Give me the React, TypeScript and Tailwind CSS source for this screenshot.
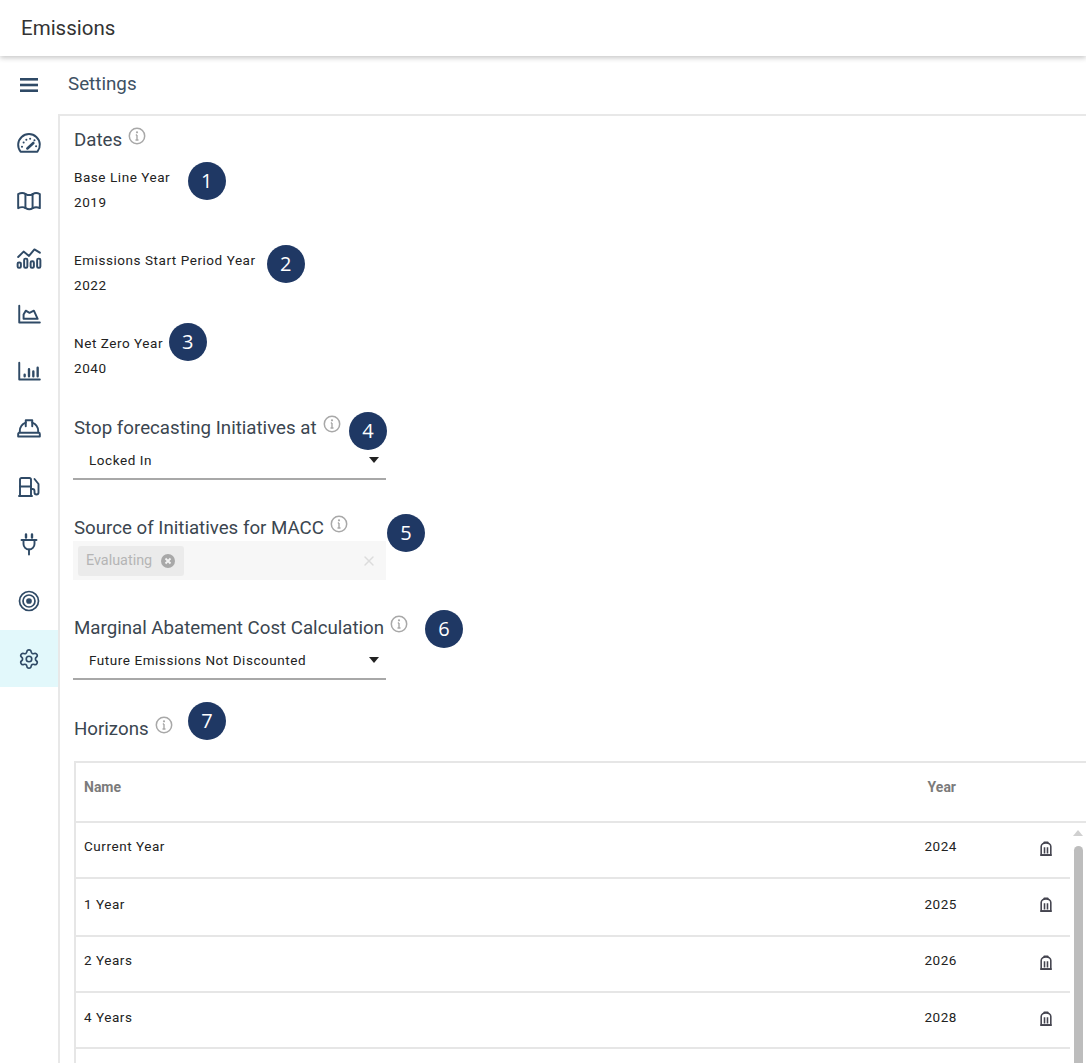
import { Settings, X } from "lucide-react";
import type { ReactNode } from "react";

const navy = "#2f4a66";

// sidebar icons, drawn on a 24 box
const Glyph = ({ children }: { children: ReactNode }) => (
  <svg width="26" height="26" viewBox="0 0 24 24" fill="none" stroke={navy} strokeWidth="1.8" strokeLinecap="round" strokeLinejoin="round">
    {children}
  </svg>
);

const GaugeIcon = () => (
  <Glyph>
    <path d="M4.200 20a10 10 0 1 1 15.600 0Z" />
    <path d="M10.500 17l5.500-5" strokeWidth="2.400" />
    <path d="M5.500 15.500h.1M7 11.500h.1M9.500 9h.1M13 8h.1M17 9.500h.1M18.500 15h.1" strokeWidth="1.800" />
  </Glyph>
);

const MapGlyph = () => (
  <Glyph>
    <path d="M2 6.500c2.500-1.200 5-1.200 7 0s4.500 1.200 6.500 0 4-1.200 6.500 0v13c-2.500-1.200-4.500-1.200-6.500 0s-4.500 1.200-6.500 0-4.500-1.200-7 0Z" />
    <path d="M8.700 6.500v13M15.300 6.500v13" />
  </Glyph>
);

const TrendBarsIcon = () => (
  <Glyph>
    <path d="M2 12l5-5 5 4 5-6 5 3" />
    <rect x="1.500" y="17" width="3" height="5" rx="1.200" />
    <rect x="7.500" y="13.500" width="3" height="8.500" rx="1.200" />
    <rect x="13.500" y="16" width="3" height="6" rx="1.200" />
    <rect x="19.500" y="13.500" width="3" height="8.500" rx="1.200" />
  </Glyph>
);

const AreaIcon = () => (
  <Glyph>
    <path d="M3 3.500v15.500h19" />
    <path d="M7 15.500v-4l2-3.500 3.500 2 4-2 3.500 7.500Z" />
  </Glyph>
);

const BarsIcon = () => (
  <Glyph>
    <path d="M3 3.500v15.500h19" />
    <path d="M8 14.500v1.500M12 9.500v6.500M16 11.500v4.500M20 8v8" strokeWidth="2.200" />
  </Glyph>
);

const HelmetIcon = () => (
  <Glyph>
    <path d="M3.500 15v-1a8.500 8.500 0 0 1 5.500-7.900M20.500 15v-1a8.500 8.500 0 0 0-5.500-7.900" />
    <path d="M9 9.500V4h6v5.500" />
    <path d="M3 15.500h18a1 1 0 0 1 1 1V19H2v-2.500a1 1 0 0 1 1-1Z" />
  </Glyph>
);

const PumpIcon = () => (
  <svg width="24" height="24" viewBox="0 0 24 24" fill="none" stroke={navy} strokeWidth="1.900" strokeLinecap="round" strokeLinejoin="round">
    <path d="M3 21V4.500A1.500 1.500 0 0 1 4.500 3h8A1.500 1.500 0 0 1 14 4.500V21" />
    <path d="M3 11.500h11M2 21h13" />
    <path d="M14 14h1.500a2 2 0 0 1 2 2v1.500a2 2 0 0 0 4 0V9l-4-5" />
  </svg>
);

const PlugIcon = () => (
  <svg width="24" height="24" viewBox="0 0 24 24" fill="none" stroke={navy} strokeWidth="1.900" strokeLinecap="round" strokeLinejoin="round">
    <path d="M9 2.500v3M15 2.500v3" strokeWidth="2.400" />
    <path d="M4.500 8h15" />
    <path d="M6.500 8.500v3.500a5.500 5.500 0 0 0 11 0V8.500" />
    <path d="M12 17.500v5" />
  </svg>
);

const TargetIcon = () => (
  <svg width="24" height="24" viewBox="0 0 24 24" fill="none" stroke={navy} strokeWidth="1.700">
    <circle cx="12" cy="12" r="9.500" />
    <circle cx="12" cy="12" r="6" />
    <circle cx="12" cy="12" r="2" fill={navy} />
  </svg>
);

const TrashGlyph = () => (
  <svg width="14" height="16" viewBox="0 0 16 18" fill="none" stroke="#44444f" strokeWidth="1.800" strokeLinejoin="round" className="mr-[17px] mt-[18px]">
    <path d="M2.500 16V6a5.500 4 0 0 1 11 0v10Z" />
    <path d="M6 2.500V1.200h4v1.300M1.500 16h13" />
    <path d="M6.300 7v7M9.700 7v7" />
  </svg>
);

const InfoMark = () => (
  <svg width="18" height="18" viewBox="0 0 18 18" fill="none" className="ml-[6px] -mt-[8px]">
    <circle cx="9" cy="9" r="7.700" stroke="#a8a8a8" strokeWidth="1.500" />
    <path d="M9 8v5M7.500 13h3M7.800 8H9" stroke="#a8a8a8" strokeWidth="1.400" />
    <circle cx="9" cy="5.300" r="1.100" fill="#a8a8a8" />
  </svg>
);

const navItems = [
  { key: "gauge", icon: <GaugeIcon /> },
  { key: "map", icon: <MapGlyph /> },
  { key: "trend", icon: <TrendBarsIcon /> },
  { key: "area", icon: <AreaIcon /> },
  { key: "bars", icon: <BarsIcon /> },
  { key: "helmet", icon: <HelmetIcon /> },
  { key: "fuel", icon: <PumpIcon /> },
  { key: "plug", icon: <PlugIcon /> },
  { key: "target", icon: <TargetIcon /> },
  { key: "settings", icon: <Settings size={22} color={navy} strokeWidth={1.8} />, active: true },
];

const Badge = ({ n, className }: { n: number; className: string }) => (
  <span
    className={`absolute flex h-[38px] w-[38px] items-center justify-center rounded-full bg-[#1f3864] font-['Open_Sans',sans-serif] text-[20px] text-white ${className}`}
  >
    {n}
  </span>
);

const Heading = ({ children }: { children: ReactNode }) => (
  <div className="flex h-[24px] items-center text-[18.700px] leading-[24px] text-[#3b4650]">{children}</div>
);

const YearField = ({ label, value, badge }: { label: string; value: string; badge: ReactNode }) => (
  <div className="relative h-[43px] text-[13.500px] leading-[18px] tracking-[0.550px] text-[#222]">
    <div>{label}</div>
    <div className="mt-[7px]">{value}</div>
    {badge}
  </div>
);

const SelectBox = ({ value }: { value: string }) => (
  <div className="-ml-px flex h-[40px] w-[313px] items-center justify-between border-b-2 border-[#a8a8a8] pl-[16px] pr-[7px] pt-[2px] text-[13.500px] tracking-[0.550px] text-[#222]">
    <span>{value}</span>
    <span className="h-0 w-0 border-x-[5px] border-t-[6px] border-x-transparent border-t-[#222]" />
  </div>
);

const rows = [
  { name: "Current Year", year: "2024", h: "h-[56px]", pt: "pt-[14px]" },
  { name: "1 Year", year: "2025", h: "h-[58px]", pt: "pt-[16px]" },
  { name: "2 Years", year: "2026", h: "h-[56px]", pt: "pt-[14px]" },
  { name: "4 Years", year: "2028", h: "h-[56px]", pt: "pt-[15px]" },
  { name: "", year: "", h: "h-[56px]", pt: "" },
];

export default function App() {
  return (
    <div className="flex h-[1063px] w-[1086px] flex-col overflow-hidden bg-white font-['Roboto',sans-serif]">
      <header className="z-10 flex h-[56px] shrink-0 items-center pl-[21px] text-[20.500px] text-[#333] shadow-[0_2px_5px_rgba(0,0,0,0.22)]">
        Emissions
      </header>

      <div className="flex min-h-0 flex-1">
        {/* left rail */}
        <aside className="flex w-[58px] shrink-0 flex-col">
          <div className="flex h-[58px] items-center justify-center pr-[1px]">
            <svg width="18" height="14" viewBox="0 0 18 14" fill={navy}>
              <rect width="18" height="2.600" />
              <rect y="5.700" width="18" height="2.600" />
              <rect y="11.400" width="18" height="2.600" />
            </svg>
          </div>
          <nav className="flex flex-col">
            {navItems.map((item) => (
              <div
                key={item.key}
                className={`flex h-[57.330px] items-center justify-center ${item.active ? "bg-[#e2f8fb]" : ""}`}
              >
                {item.icon}
              </div>
            ))}
          </nav>
        </aside>

        <main className="flex min-w-0 flex-1 flex-col">
          <div className="flex h-[58px] shrink-0 items-center pb-[2px] pl-[10px] text-[18.800px] text-[#3d5063]">Settings</div>

          <div className="min-h-0 flex-1 overflow-hidden border-l-2 border-t-2 border-[#e8e8e8] pl-[14px] pt-[12px]">
            <Heading>
              Dates <InfoMark />
            </Heading>

            <div className="mt-[16px] flex flex-col gap-[40px]">
              <YearField label="Base Line Year" value="2019" badge={<Badge n={1} className="left-[114px] -top-[6px]" />} />
              <YearField label="Emissions Start Period Year" value="2022" badge={<Badge n={2} className="left-[193px] -top-[6px]" />} />
              <YearField label="Net Zero Year" value="2040" badge={<Badge n={3} className="left-[95px] -top-[11px]" />} />
            </div>

            <div className="relative mt-[39px]">
              <Heading>
                Stop forecasting Initiatives at <InfoMark />
              </Heading>
              <Badge n={4} className="left-[275px] -top-[4px]" />
              <SelectBox value="Locked In" />
            </div>

            <div className="relative mt-[36px]">
              <Heading>
                Source of Initiatives for MACC <InfoMark />
              </Heading>
              <Badge n={5} className="left-[313px] -top-[2px]" />
              <div className="-ml-px mt-[1px] flex h-[39px] w-[313px] items-center justify-between bg-[#f7f7f7] pl-[5px] pr-[9px]">
                <span className="flex h-[30px] w-[106px] items-center gap-[9px] rounded-[3px] bg-[#ebebeb] pl-[8px] pt-px text-[14.400px] text-[#b5b5b5]">
                  Evaluating
                  <svg width="14" height="14" viewBox="0 0 14 14">
                    <circle cx="7" cy="7" r="7" fill="#a8a8a8" />
                    <path d="M4.500 4.500l5 5M9.500 4.500l-5 5" stroke="#f3f3f3" strokeWidth="1.800" />
                  </svg>
                </span>
                <X size={16} color="#dcdcdc" strokeWidth={2} />
              </div>
            </div>

            <div className="relative mt-[36px]">
              <Heading>
                Marginal Abatement Cost Calculation <InfoMark />
              </Heading>
              <Badge n={6} className="left-[351px] -top-[6px]" />
              <SelectBox value="Future Emissions Not Discounted" />
            </div>

            <div className="relative mt-[37px]">
              <Heading>
                Horizons <InfoMark />
              </Heading>
              <Badge n={7} className="left-[114px] -top-[15px]" />
            </div>

            {/* horizons table */}
            <div className="mt-[20px] w-[1030px] border-l-2 border-t-2 border-[#e6e6e6]">
              <div className="flex h-[60px] border-b-2 border-[#e6e6e6] pt-[15px] text-[14px] font-bold leading-[18px] text-[#7b7b7b]">
                <span className="pl-[8px]">Name</span>
                <span className="ml-auto mr-[148px]">Year</span>
              </div>
              <div className="flex">
                <div className="w-[994px] shrink-0">
                  {rows.map((row) => (
                    <div key={row.year || "blank"} className={`${row.h} flex items-start border-b-2 border-[#e6e6e6] text-[13.500px] leading-[18px] tracking-[0.550px] text-[#222]`}>
                      <span className={`${row.pt} pl-[8px]`}>{row.name}</span>
                      {row.year && (
                        <>
                          <span className={`${row.pt} ml-auto mr-[82px]`}>{row.year}</span>
                          <TrashGlyph />
                        </>
                      )}
                    </div>
                  ))}
                </div>
                {/* scrollbar */}
                <div className="ml-[2px] flex w-[12px] flex-col items-center pt-[7px]">
                  <span className="h-0 w-0 border-x-[5px] border-b-[6px] border-x-transparent border-b-[#d0d0d0]" />
                  <span className="mt-[10px] h-[240px] w-[9px] rounded-full bg-[#bdbdbd]" />
                </div>
              </div>
            </div>
          </div>
        </main>
      </div>
    </div>
  );
}
